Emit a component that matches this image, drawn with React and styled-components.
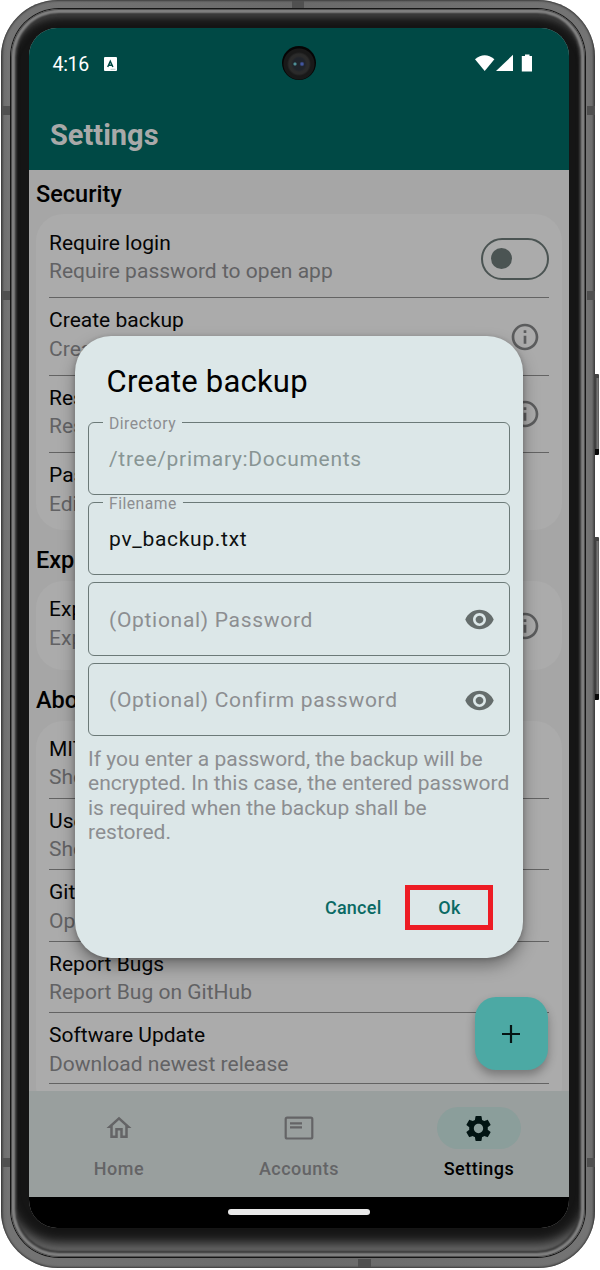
import React from "react";
import styled, { createGlobalStyle, css } from "styled-components";

const Global = createGlobalStyle`
  *{box-sizing:border-box}
  body{margin:0;background:#fff;font-family:Roboto,"Liberation Sans",sans-serif;}
`;

const Stage = styled.div`
  position: relative;
  width: 600px;
  height: 1270px;
  overflow: hidden;
  padding: 0 5px 2px 1px;
`;
const Shell = styled.div`
  width: 594px;
  height: 1268px;
  border-radius: 57px;
  padding: 8px 9px 10px;
  background: linear-gradient(90deg, #4b4b4b 0, #6e6e6e 3px, #747474 7px, #6a6a6a 50%, #747474 587px, #6e6e6e 591px, #4b4b4b 594px);
  box-shadow: inset 0 0 2px 1px #3c3c3c;
`;
const Seam = styled.div`
  height: 100%;
  border-radius: 49px;
  padding: 1px;
  background: #161616;
`;
const Rim = styled.div`
  height: 100%;
  border-radius: 48px;
  padding: 19px 18px 39px;
  background: #151515;
  box-shadow: inset 0 0 1px 1px #4a4a4a, inset 0 0 2px 4px #848484, inset 0 0 2px 6px #333,
    inset 0 -18px 12px -4px #6a6a6a, inset 0 10px 8px -2px #505050;
`;
const Screen = styled.div`
  position: relative;
  width: 540px;
  height: 1200px;
  border-radius: 28px;
  overflow: hidden;
  background: #a7a7a7;
  display: flex;
  flex-direction: column;
`;
const SideKey = styled.div`
  position: absolute;
  left: 595px;
  top: ${(p) => p.$top}px;
  width: 4px;
  height: ${(p) => p.$height}px;
  background: linear-gradient(90deg, #333, #777 60%, #555);
  border-top: 4px solid #444;
  border-bottom: 6px solid #0a0a0a;
  border-radius: 0 1px 1px 0;
`;
const Antenna = styled.div`
  position: absolute;
  left: ${(p) => p.$left}px;
  top: ${(p) => p.$top}px;
  width: ${(p) => p.$w || 8}px;
  height: ${(p) => p.$h || 9}px;
  background: #505050;
`;

const Header = styled.header`
  height: 142px;
  flex: none;
  background: #004945;
`;
const StatusBar = styled.div`
  height: 72px;
  padding: 0 36px 0 23.5px;
  display: flex;
  align-items: center;
  color: #fff;
`;
const Clock = styled.span`
  font-size: 19.5px;
  width: 51.5px;
  letter-spacing: -0.3px;
`;
const StatusIcons = styled.div`
  margin-left: auto;
  display: flex;
  align-items: center;
  height: 20px;
`;
const Camera = styled.div`
  position: absolute;
  left: 253px;
  top: 18px;
  width: 34px;
  height: 34px;
  border-radius: 50%;
  background: radial-gradient(circle at 13px 18px, #4f8f96 0 0.8px, transparent 2.2px),
    radial-gradient(circle at 20px 18px, #4256a0 0 1px, transparent 2.6px),
    radial-gradient(circle at 17px 18px, #20242b 0 6px, #2b2b2b 8px 10px, #191919 12px 15px, #050505 16px);
`;
const PageTitle = styled.h1`
  margin: 18px 0 0 21px;
  font-size: 29px;
  line-height: 34px;
  font-weight: 700;
  color: #a9a9a9;
`;

const Content = styled.main`
  flex: 1;
  min-height: 0;
  overflow: hidden;
  padding: 0 7px;
  background: #a6a6a6;
`;
const SectionTitle = styled.h2`
  margin: 0;
  height: ${(p) => p.$h}px;
  padding-top: ${(p) => p.$pt}px;
  font-size: 23.5px;
  line-height: 28px;
  font-weight: 500;
  color: #000;
`;
const Card = styled.section`
  border-radius: 27px;
  padding: 0 13px;
  background: #ababab;
`;
const Row = styled.div`
  position: relative;
  height: ${(p) => p.$h}px;
  padding-top: ${(p) => p.$pt}px;
  display: flex;
  justify-content: space-between;
  align-items: flex-start;
  ${(p) => p.$line && css`border-bottom: 1.3px solid #636363;`}
`;
const RowTitle = styled.div`
  font-size: 21px;
  line-height: 28.5px;
  color: #050505;
  font-weight: 385;
  letter-spacing: 0.02px;
  white-space: nowrap;
`;
const RowSub = styled(RowTitle)`
  color: #626264;
`;
const Switch = styled.div`
  width: 68px;
  height: 42px;
  margin-top: 9.5px;
  border: 2.6px solid #4b5453;
  border-radius: 21px;
  padding: 8px;
`;
const Knob = styled.div`
  width: 21px;
  height: 21px;
  border-radius: 50%;
  background: #4b5453;
`;
const InfoBox = styled.div`
  width: 32px;
  height: 32px;
  margin: 14.5px 8px 0 0;
`;

const Nav = styled.nav`
  height: 106px;
  flex: none;
  display: grid;
  grid-template-columns: repeat(3, 1fr);
  background: #999f9e;
`;
const NavItem = styled.div`
  display: flex;
  flex-direction: column;
  align-items: center;
  padding-top: 16px;
  font-size: 18px;
  font-weight: 480;
  letter-spacing: 0.5px;
  line-height: 24px;
  color: ${(p) => (p.$on ? "#000" : "#646466")};
`;
const Pill = styled.div`
  width: 84px;
  height: 42px;
  margin-bottom: 8px;
  border-radius: 21px;
  display: flex;
  align-items: center;
  justify-content: center;
  padding-right: 1px;
  background: ${(p) => (p.$on ? "#8b9e9b" : "transparent")};
`;
const GestureBar = styled.div`
  height: 31px;
  flex: none;
  background: #000;
  display: flex;
  justify-content: center;
  padding-top: 12px;
`;
const Handle = styled.div`
  width: 142px;
  height: 6px;
  border-radius: 3px;
  background: #e8e8e8;
`;
const Fab = styled.button`
  position: absolute;
  left: 446px;
  top: 969px;
  width: 73px;
  height: 73px;
  border: 0;
  padding: 0 1px 0 0;
  border-radius: 21px;
  background: #4ca9a4;
  box-shadow: 0 5px 10px rgba(0, 0, 0, 0.3);
  display: flex;
  align-items: center;
  justify-content: center;
`;

const Dialog = styled.div`
  position: absolute;
  left: 46px;
  top: 307.5px;
  width: 448px;
  height: 622.5px;
  border-radius: 36px;
  background: #dce7e8;
  box-shadow: 0 8px 16px rgba(0, 0, 0, 0.34), 0 1px 5px rgba(0, 0, 0, 0.2);
  padding: 28px 13px 0 13px;
`;
const DialogTitle = styled.h3`
  margin: 0 0 22px 18.5px;
  font-size: 31px;
  line-height: 36px;
  font-weight: 380;
  letter-spacing: 0.2px;
  color: #000;
`;
const Field = styled.div`
  position: relative;
  height: 73.3px;
  margin-bottom: 7.2px;
  border: 1.3px solid #6c7a78;
  border-radius: 6px;
  padding: 1px 14px 0 20px;
  display: flex;
  align-items: center;
  justify-content: space-between;
  font-size: 21px;
  font-weight: 385;
  letter-spacing: 0.7px;
  color: ${(p) => p.$color || "#8c8e91"};
`;
const Legend = styled.span`
  position: absolute;
  left: 14px;
  top: -9.5px;
  padding: 0 6px;
  font-size: 15.7px;
  line-height: 22px;
  letter-spacing: 0.5px;
  background: linear-gradient(#dce7e8, #dce7e8) center / 100% 6px no-repeat;
  color: #8c8e91;
`;
const Note = styled.p`
  margin: 10.5px 0 0;
  font-size: 21px;
  line-height: 24.5px;
  font-weight: 385;
  letter-spacing: 0;
  color: #8c8e91;
  white-space: nowrap;
`;
const Actions = styled.div`
  display: flex;
  justify-content: flex-end;
  align-items: center;
  margin: 40.2px 17px 0 0;
  gap: 23.5px;
`;
const Action = styled.button`
  border: ${(p) => (p.$marked ? "5px solid #ed1c24" : "0")};
  width: ${(p) => (p.$marked ? "88px" : "auto")};
  height: 45px;
  padding: 1px 0 0 1px;
  background: none;
  font: 480 18px Roboto, sans-serif;
  letter-spacing: 0.25px;
  color: #0a6a64;
`;

const MI = ({ d, size, color }) => (
  <svg width={size} height={size} viewBox="0 0 24 24" fill={color}><path d={d} /></svg>
);
const INFO = "M11 7h2v2h-2zm0 4h2v6h-2zm1-9C6.48 2 2 6.48 2 12s4.48 10 10 10 10-4.48 10-10S17.52 2 12 2zm0 18c-4.41 0-8-3.59-8-8s3.59-8 8-8 8 3.59 8 8-3.59 8-8 8z";
const EYE = "M12 4.5C7 4.5 2.73 7.61 1 12c1.73 4.39 6 7.5 11 7.5s9.27-3.11 11-7.5c-1.73-4.39-6-7.5-11-7.5zM12 17c-2.76 0-5-2.24-5-5s2.24-5 5-5 5 2.24 5 5-2.24 5-5 5zm0-8c-1.66 0-3 1.34-3 3s1.34 3 3 3 3-1.34 3-3-1.34-3-3-3z";
const HOME = "M12 5.69l5 4.5V18h-2v-6H9v6H7v-7.81l5-4.5M12 3L2 12h3v8h6v-6h2v6h6v-8h3L12 3z";
const GEAR = "M19.14 12.94c.04-.3.06-.61.06-.94 0-.32-.02-.64-.07-.94l2.03-1.58c.18-.14.23-.41.12-.61l-1.92-3.32c-.12-.22-.37-.29-.59-.22l-2.39.96c-.5-.38-1.03-.7-1.62-.94l-.36-2.54c-.04-.24-.24-.41-.48-.41h-3.84c-.24 0-.43.17-.47.41l-.36 2.54c-.59.24-1.13.57-1.62.94l-2.39-.96c-.22-.08-.47 0-.59.22L2.74 8.87c-.12.21-.08.47.12.61l2.03 1.58c-.05.3-.09.63-.09.94s.02.64.07.94l-2.03 1.58c-.18.14-.23.41-.12.61l1.92 3.32c.12.22.37.29.59.22l2.39-.96c.5.38 1.03.7 1.62.94l.36 2.54c.05.24.24.41.48.41h3.84c.24 0 .44-.17.47-.41l.36-2.54c.59-.24 1.13-.56 1.62-.94l2.39.96c.22.08.47 0 .59-.22l1.92-3.32c.12-.22.07-.47-.12-.61l-2.01-1.58zM12 15.6c-1.98 0-3.6-1.62-3.6-3.6s1.62-3.6 3.6-3.6 3.6 1.62 3.6 3.6-1.62 3.6-3.6 3.6z";

function Setting({ title, sub, h, pt, line, info, toggle }) {
  return (
    <Row $h={h} $pt={pt} $line={line}>
      <div>
        <RowTitle>{title}</RowTitle>
        <RowSub>{sub}</RowSub>
      </div>
      {info && <InfoBox><MI d={INFO} size={32} color="#5b5c5d" /></InfoBox>}
      {toggle && <Switch><Knob /></Switch>}
    </Row>
  );
}

export default function App() {
  return (
    <Stage>
      <Global />
      <SideKey $top={374} $height={81} />
      <SideKey $top={537} $height={163} />
      <Shell>
        <Seam>
          <Rim>
            <Screen>
              <Header>
                <StatusBar>
                  <Clock>4:16</Clock>
                  <svg width="13" height="14" viewBox="0 0 13 14">
                    <rect width="13" height="14" rx="1" fill="#fff" />
                    <path d="M3.7 10 6.3 4.3 8.9 10M4.7 8.2h3.4" fill="none" stroke="#004945" strokeWidth="1.5" />
                    <path d="M6.5 12.3h5" stroke="#8fb0ae" strokeWidth=".7" />
                  </svg>
                  <StatusIcons>
                    <svg width="58" height="20" viewBox="0 0 58 20" fill="#fff">
                      <path d="M0 5.2Q9.7-2.8 19.4 5.2L9.7 17z" />
                      <path d="M38 .8V17H21z" />
                      <path d="M47.6 2H50V.6h4.5V2H57V17.5H46.8V2z" />
                    </svg>
                  </StatusIcons>
                </StatusBar>
                <PageTitle>Settings</PageTitle>
              </Header>
              <Content>
                <SectionTitle $h={44} $pt={10}>Security</SectionTitle>
                <Card>
                  <Setting h={84} pt={14.8} line toggle title="Require login" sub="Require password to open app" />
                  <Setting h={77.5} pt={8.4} line info title="Create backup" sub="Creat" />
                  <Setting h={77.5} pt={8.4} line info title="Res" sub="Res" />
                  <Setting h={77} pt={8.4} title="Pas" sub="Edit" />
                </Card>
                <SectionTitle $h={51} $pt={16}>Exp</SectionTitle>
                <Card>
                  <Setting h={89} pt={14} info title="Exp" sub="Exp" />
                </Card>
                <SectionTitle $h={51} $pt={16}>Abo</SectionTitle>
                <Card>
                  <Setting h={77.5} pt={13.8} line title="MIT" sub="Sho" />
                  <Setting h={71.5} pt={8} line title="Use" sub="Sho" />
                  <Setting h={71.5} pt={8} line title="Git" sub="Op" />
                  <Setting h={71.5} pt={8} line title="Report Bugs" sub="Report Bug on GitHub" />
                  <Setting h={71.2} pt={8} line title="Software Update" sub="Download newest release" />
                  <Row $h={30} />
                </Card>
              </Content>
              <Nav>
                <NavItem><Pill><MI d={HOME} size={30} color="#646466" /></Pill>Home</NavItem>
                <NavItem>
                  <Pill>
                    <svg width="30" height="24" viewBox="0 0 30 24" fill="none" stroke="#646466" strokeWidth="2.2">
                      <rect x="1.7" y="1.7" width="26.6" height="20.8" rx="1.5" />
                      <path d="M6 7.3h12M6 11.3h12" />
                    </svg>
                  </Pill>
                  Accounts
                </NavItem>
                <NavItem $on><Pill $on><MI d={GEAR} size={31} color="#021413" /></Pill>Settings</NavItem>
              </Nav>
              <GestureBar><Handle /></GestureBar>
              <Camera />
              <Fab>
                <svg width="20" height="20" viewBox="0 0 20 20" stroke="#061514" strokeWidth="2.2"><path d="M10 1v18M1 10h18" /></svg>
              </Fab>
              <Dialog>
                <DialogTitle>Create backup</DialogTitle>
                <Field $color="#889594"><Legend>Directory</Legend>/tree/primary:Documents</Field>
                <Field $color="#0d1111"><Legend>Filename</Legend>pv_backup.txt</Field>
                <Field>(Optional) Password<MI d={EYE} size={31} color="#656d6c" /></Field>
                <Field>(Optional) Confirm password<MI d={EYE} size={31} color="#656d6c" /></Field>
                <Note>
                  If you enter a password, the backup will be<br />
                  encrypted. In this case, the entered password<br />
                  is required when the backup shall be<br />
                  restored.
                </Note>
                <Actions>
                  <Action>Cancel</Action>
                  <Action $marked>Ok</Action>
                </Actions>
              </Dialog>
            </Screen>
          </Rim>
        </Seam>
      </Shell>
      <Antenna $left={2} $top={106} />
      <Antenna $left={587} $top={106} />
      <Antenna $left={2} $top={291} />
      <Antenna $left={587} $top={291} />
      <Antenna $left={2} $top={1158} />
      <Antenna $left={587} $top={1158} />
      <Antenna $left={292} $top={1} $w={12} $h={7} />
      <Antenna $left={358} $top={1259} $w={13} $h={8} />
    </Stage>
  );
}
